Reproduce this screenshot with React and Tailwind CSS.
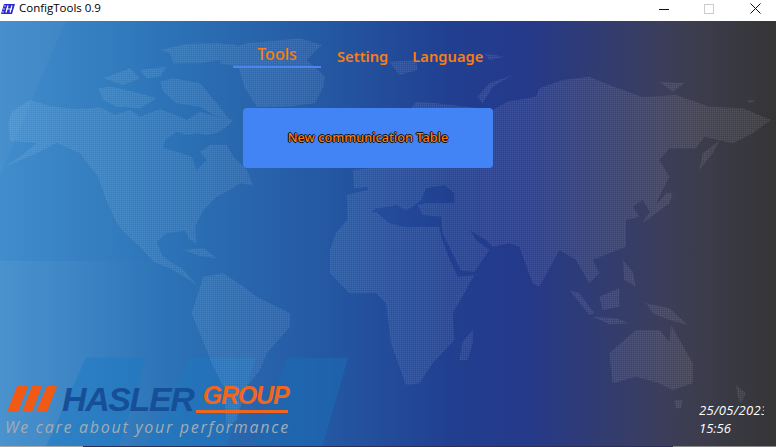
import React from "react";

// outlines traced from the reference, in 3x crop units (left crop starts at x=0, right crop at x=376)
const westLand = [
  "25,310 35,275 90,240 150,258 225,268 300,262 345,285 390,270 420,290 480,268 540,290 560,300 600,275 650,290 700,300 680,320 650,340 620,345 590,340 560,345 530,335 495,360 490,385 530,395 575,410 590,450 620,420 600,395 630,375 680,375 700,410 740,450 760,497 720,490 690,510 650,530 610,570 585,620 590,670 570,660 555,632 500,640 470,665 485,705 510,725 545,745 590,795 560,775 510,745 460,725 420,680 375,640 350,610 315,530 295,470 270,440 240,400 170,368 110,400 15,440 60,410 110,370 30,362",
  "670,90 740,70 900,55 965,75 920,120 975,170 970,200 945,250 860,260 770,260 735,205 715,140 660,130",
  "480,90 560,72 650,70 710,75 660,120 600,130 520,130 510,100",
  "480,185 520,175 600,190 650,250 690,300 640,285 600,260 530,250 490,215",
  "295,205 330,200 400,215 470,235 420,265 350,260 310,240",
  "310,175 390,145 420,175 370,195",
  "420,150 500,140 480,170 440,175",
  "550,690 610,685 650,715 600,708",
  "575,880 610,770 670,760 730,800 770,830 870,880 870,920 800,1000 780,1050 740,1100 710,1200 680,1220 670,1100 640,1040",
];

const eastLand = [
  "-70,450 -25,445 -20,500 -65,505",
  "-88,525 -25,510 -30,450 120,245 180,250 350,270 395,245 480,230 490,205 560,180 640,170 700,195 800,232 900,225 1000,260 1100,265 1185,300 1130,340 1070,370 985,350 960,385 880,385 850,420 880,470 845,540 830,590 800,540 770,560 790,590 750,600 750,680 700,700 650,720 670,760 640,790 600,720 550,690 490,800 470,790 430,680 400,670 350,680 330,660 280,630 240,600 195,590 140,585 125,555 150,550 235,550 235,520 205,495 150,505 135,540 110,560 90,570 60,555 40,560 0,565 -30,590 -85,600",
  "195,585 240,595 280,628 300,660 340,690 295,755 255,752 200,640",
  "-138,690 -120,640 -78,590 0,575 40,610 90,622 190,620 195,650 215,705 245,770 295,765 270,810 230,880 235,960 170,1030 130,1090 90,1095 70,1040 45,970 30,850 0,820 -80,820 -138,760",
  "250,1020 260,965 290,930 290,970 275,1020",
  "700,1000 780,930 850,930 880,965 885,915 950,1030 950,1090 890,1110 850,1090 780,1070 710,1090",
  "895,1140 920,1140 915,1165 900,1165",
  "1080,1095 1110,1120 1095,1150 1085,1130",
  "580,810 610,820 655,880 640,885",
  "650,890 720,895 760,910 700,912",
  "670,830 730,805 730,860 680,870",
  "740,720 770,755 780,800 745,780",
  "810,850 880,865 935,915 880,900 830,880",
  "800,610 880,550 890,520 870,520 810,590",
  "970,450 980,400 1030,362 1010,400",
  "305,230 340,190 410,165 350,200 320,250",
  "40,125 120,120 125,150 70,165",
  "325,100 385,110 340,120",
  "850,185 925,190 890,215",
  "1115,240 1140,240 1120,250",
];

function WorldMap() {
  return (
    <svg className="absolute left-0 top-0 h-full w-full" viewBox="0 0 776 426">
      <defs>
        <pattern id="dots" width="2" height="2" patternUnits="userSpaceOnUse">
          <rect width="1.5" height="1.5" fill="#fff" fillOpacity="0.13" />
        </pattern>
        <clipPath id="land">
          {westLand.map((p) => (
            <polygon key={p} points={p} transform="translate(0 -1) scale(0.33333)" />
          ))}
          {eastLand.map((p) => (
            <polygon key={p} points={p} transform="translate(376 -1) scale(0.33333)" />
          ))}
        </clipPath>
      </defs>
      <rect width="776" height="426" fill="url(#dots)" clipPath="url(#land)" />
    </svg>
  );
}

function AppIcon() {
  return (
    <svg width="14" height="10" viewBox="0 0 14 10">
      <polygon points="3,0 14,0 11,10 0,10" fill="#2a2ad0" />
      <path d="M1 8h2M2 5h2M3 2h2" stroke="#c8c8f0" strokeWidth="1" />
      <path d="M7 1.5 5 8.5M11 1.5 9 8.5M5 5h6" stroke="#fff" strokeWidth="1.2" fill="none" />
    </svg>
  );
}

function WindowButtons() {
  return (
    <div className="flex items-center">
      <svg width="10" height="10" viewBox="0 0 10 10" className="mr-[35px]">
        <path d="M0 5.5h10" stroke="#111" />
      </svg>
      <svg width="10" height="10" viewBox="0 0 10 10" className="mr-[36px]">
        <rect x="0.5" y="0.5" width="9" height="9" fill="none" stroke="#ccc" />
      </svg>
      <svg width="11" height="11" viewBox="0 0 11 11" className="mr-[15px]">
        <path d="M.5.5l10 10M10.5.5l-10 10" stroke="#111" />
      </svg>
    </div>
  );
}

function Logo() {
  return (
    <div className="flex w-[292px] flex-col pl-[5px] font-['Liberation_Sans',sans-serif]">
      <div className="flex h-[30px] items-end">
        <svg width="52" height="26" viewBox="0 0 52 26" className="mb-[1px] ml-[2px] shrink-0">
          <polygon points="10,0 21,0 11,26 0,26" fill="#f05a14" />
          <polygon points="25,0 35,0 25,26 15,26" fill="#f05a14" />
          <polygon points="40,0 50,0 40,26 29,26" fill="#f05a14" />
        </svg>
        <span className="ml-[3px] text-[34px] leading-[28px] font-bold tracking-[-1.4px] text-[#164f97] italic">HASLER</span>
        <div className="ml-[3px] flex flex-col items-end">
          <span className="text-[25px] leading-[24px] font-bold tracking-[-1.2px] text-[#f0661e] italic">GROUP</span>
          <div className="mt-[3px] h-[3px] w-[92px] bg-[#f0661e]" />
        </div>
      </div>
      <span className="mt-[5px] font-['Open_Sans',sans-serif] text-[16px] leading-[18px] tracking-[1.7px] whitespace-nowrap text-[#a3acb2] italic">
        We care about your performance
      </span>
    </div>
  );
}

export default function App() {
  return (
    <div className="flex h-[447px] w-[776px] flex-col overflow-hidden bg-white font-['Open_Sans',sans-serif]">
      <div className="flex h-[21px] shrink-0 items-start justify-between bg-white">
        <div className="flex items-center pl-[1px]">
          <div className="pt-[1px]">
            <AppIcon />
          </div>
          <span className="ml-[4px] text-[11.5px] leading-4 text-black">ConfigTools 0.9</span>
        </div>
        <div className="pt-[3px]">
          <WindowButtons />
        </div>
      </div>

      <main className="relative flex flex-1 flex-col overflow-hidden bg-[linear-gradient(90deg,#418dcc_0%,#2d75b8_20%,#2458a2_42%,#213f90_58%,#25398a_68%,#3b3e5c_85%,#3d3d50_89%,#353535_100%)]">
        <div className="absolute left-0 top-0 h-[154px] w-[66px] bg-white/3 [clip-path:polygon(0_0,100%_0,0_100%)]" />
        <div className="absolute bottom-0 left-0 h-[186px] w-[170px] bg-linear-to-r from-white/5 to-transparent" />
        <div className="absolute bottom-0 left-[46px] h-[97px] w-[100px] bg-[#1c7ac4]/50 [clip-path:polygon(40%_8%,100%_8%,73%_100%,0_100%)]" />
        <div className="absolute bottom-0 left-[146px] h-[97px] w-[110px] bg-[#1c7ac4]/45 [clip-path:polygon(40%_8%,100%_8%,73%_100%,0_100%)]" />
        <div className="absolute bottom-0 left-[253px] h-[97px] w-[95px] bg-[#1c6ab4]/60 [clip-path:polygon(36%_8%,100%_8%,73%_100%,0_100%)]" />
        <WorldMap />

        <div className="relative flex h-full flex-col">
          <nav className="flex items-start pl-[233px] pt-[21px] font-['Noto_Sans',sans-serif] text-[#fb7c10]">
            <div className="flex w-[88px] flex-col items-center">
              <span className="h-[24px] text-[16px] leading-[24px] font-medium">Tools</span>
              <div className="h-[2px] w-full bg-[#4a86ee]" />
            </div>
            <span className="ml-[16px] mt-[2px] text-[14.7px] leading-[24px] font-semibold">Setting</span>
            <span className="ml-[24px] mt-[2px] text-[14.7px] leading-[24px] font-semibold">Language</span>
          </nav>

          <div className="ml-[243px] mt-[40px] flex h-[60px] w-[250px] items-center justify-center rounded-[4px] bg-[#4283f6]">
            <span className="font-['Noto_Sans',sans-serif] text-[12.7px] font-medium text-[#ff7c0a] [text-shadow:1px_0_0_#111,-1px_0_0_#111,0_1px_0_#111,0_-1px_0_#111]">
              New communication Table
            </span>
          </div>

          <div className="mt-auto flex items-end justify-between">
            <div className="pb-[10px]">
              <Logo />
            </div>
            <div className="mr-[12px] w-[65px] overflow-hidden pb-[9px] text-[13px] leading-[18px] whitespace-nowrap text-white italic">
              <div className="tracking-[0.3px]">25/05/2023</div>
              <div>15:56</div>
            </div>
          </div>
          <div className="flex h-px shrink-0">
            <div className="w-[83px] bg-[#a8a8a8]" />
            <div className="flex-1 bg-[#2b2f55]" />
            <div className="w-[103px] bg-[#888]" />
          </div>
        </div>
      </main>
    </div>
  );
}
